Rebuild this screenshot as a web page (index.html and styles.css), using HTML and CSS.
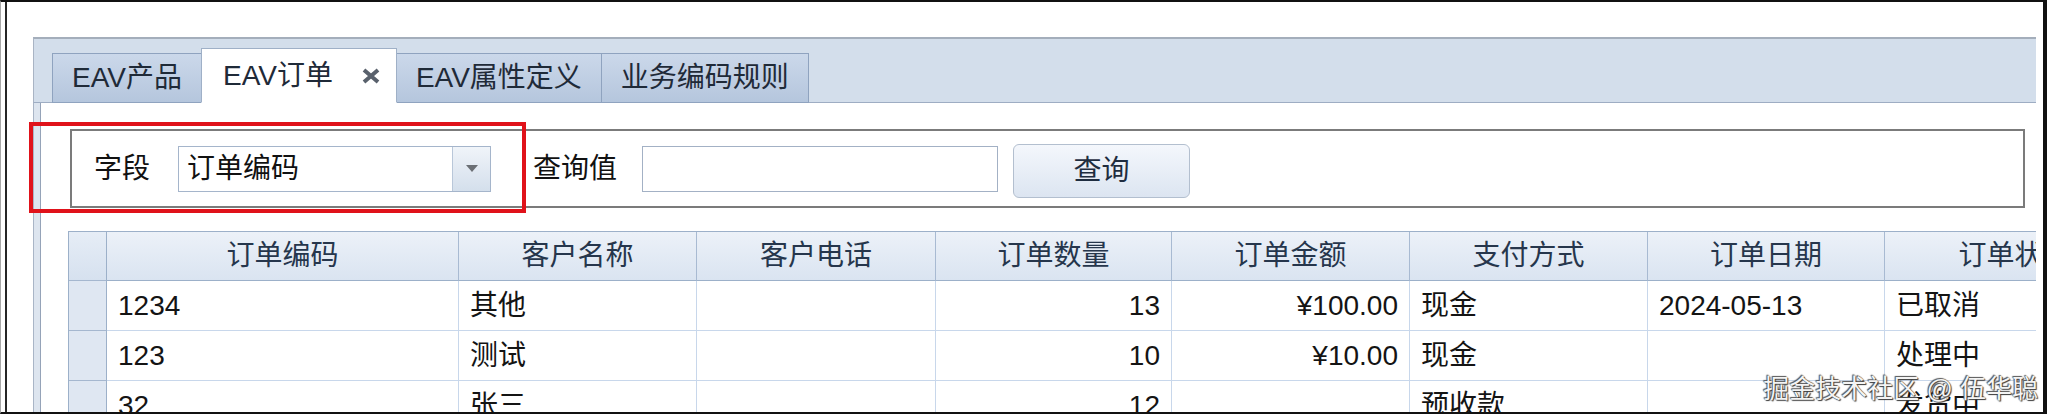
FILE: index.html
```html
<!DOCTYPE html>
<html lang="zh-CN">
<head>
<meta charset="utf-8">
<title>EAV订单</title>
<link rel="stylesheet" href="styles.css">
</head>
<body>
<div class="screen">
  <div class="frame">
    <div class="tabctl">
      <div class="tabstrip">
        <div class="tab">EAV产品</div>
        <div class="tab active">
          <span>EAV订单</span>
          <svg class="close" width="20" height="16" viewBox="0 0 20 16"><path d="M3 2 L17 14 M17 2 L3 14" stroke="#59616c" stroke-width="4" stroke-linecap="butt"/></svg>
        </div>
        <div class="tab">EAV属性定义</div>
        <div class="tab">业务编码规则</div>
      </div>
      <div class="content">
        <div class="page">
          <div class="filter">
            <span class="label">字段</span>
            <div class="combo">
              <span class="combo-text">订单编码</span>
              <span class="combo-btn"><svg width="12" height="7" viewBox="0 0 12 7"><path d="M0 0 L12 0 L6 7 Z" fill="#6b6f75"/></svg></span>
            </div>
            <span class="label label-value">查询值</span>
            <div class="textbox"></div>
            <button class="btn">查询</button>
          </div>
          <div class="grid">
            <div class="row head">
              <div class="cell ind"></div>
              <div class="cell">订单编码</div>
              <div class="cell">客户名称</div>
              <div class="cell">客户电话</div>
              <div class="cell">订单数量</div>
              <div class="cell">订单金额</div>
              <div class="cell">支付方式</div>
              <div class="cell">订单日期</div>
              <div class="cell">订单状态</div>
            </div>
            <div class="row">
              <div class="cell ind"></div>
              <div class="cell">1234</div>
              <div class="cell">其他</div>
              <div class="cell"></div>
              <div class="cell num">13</div>
              <div class="cell num">¥100.00</div>
              <div class="cell">现金</div>
              <div class="cell">2024-05-13</div>
              <div class="cell">已取消</div>
            </div>
            <div class="row">
              <div class="cell ind"></div>
              <div class="cell">123</div>
              <div class="cell">测试</div>
              <div class="cell"></div>
              <div class="cell num">10</div>
              <div class="cell num">¥10.00</div>
              <div class="cell">现金</div>
              <div class="cell"></div>
              <div class="cell">处理中</div>
            </div>
            <div class="row">
              <div class="cell ind"></div>
              <div class="cell">32</div>
              <div class="cell">张三</div>
              <div class="cell"></div>
              <div class="cell num">12</div>
              <div class="cell num"></div>
              <div class="cell">预收款</div>
              <div class="cell"></div>
              <div class="cell">发货中</div>
            </div>
          </div>
        </div>
      </div>
    </div>
  </div>
  <div class="highlight"></div>
  <div class="watermark">掘金技术社区 @ 伍华聪</div>
</div>
</body>
</html>
```

FILE: styles.css
```css
* { box-sizing: border-box; }

html, body {
  margin: 0;
  padding: 0;
  background: #ffffff;
}

body {
  font-family: "Liberation Sans", "Noto Sans CJK SC", sans-serif;
  font-size: 28px;
  color: #111111;
}

.screen {
  position: relative;
  width: 2047px;
  height: 414px;
  overflow: hidden;
  background: #ffffff;
  border-top: 2px solid #111111;
  border-right: 4px solid #111111;
  border-bottom: 2px solid #111111;
  border-left: 1px solid #a8a8a8;
}

.frame {
  height: 100%;
  margin-left: 4px;
  border-left: 2px solid #262626;
  padding-top: 35px;
  padding-left: 26px;
}

.tabctl {
  width: 2003px;
}

/* tab strip */
.tabstrip {
  height: 66px;
  display: flex;
  align-items: flex-end;
  padding-left: 18px;
  background: #d3deeb;
  border-top: 2px solid #a4aebb;
  border-left: 1px solid #a9b4c4;
  border-bottom: 1px solid #9eadc3;
}

.tab {
  height: 50px;
  margin-bottom: -1px;
  padding: 0 19px;
  display: flex;
  align-items: center;
  line-height: 1;
  color: #1f2a38;
  white-space: nowrap;
  background: linear-gradient(#cbd8ea, #b5c6dd);
  border: 1px solid #8fa3bf;
}

.tab + .tab { margin-left: -1px; }

.tab.active {
  height: 55px;
  padding: 0 15px 0 21px;
  gap: 28px;
  background: #ffffff;
  border-color: #9fb0c7;
  border-bottom: 1px solid #ffffff;
  position: relative;
  z-index: 1;
}

.close { display: block; }

/* content area */
.content {
  height: 311px;
  border-left: 1px solid #a9b5c6;
  padding-left: 6px;
  background: #dde5ef;
}

.page {
  height: 100%;
  background: #ffffff;
  border-left: 1px solid #95a3b8;
  padding-top: 26px;
}

/* filter panel */
.filter {
  margin-left: 29px;
  width: 1955px;
  height: 79px;
  border: 2px solid #7b7b7b;
  display: flex;
  align-items: center;
  padding-left: 22px;
}

.label {
  line-height: 1;
  white-space: nowrap;
  color: #111111;
}

.combo {
  margin-left: 28px;
  width: 313px;
  height: 46px;
  border: 1px solid #a5b5cb;
  display: flex;
  align-items: stretch;
  background: #ffffff;
}

.combo-text {
  flex: 1;
  display: flex;
  align-items: center;
  padding-left: 8px;
  line-height: 1;
}

.combo-btn {
  width: 38px;
  display: flex;
  align-items: center;
  justify-content: center;
  border-left: 1px solid #b9c7d9;
  background: linear-gradient(#f0f4f9, #d4dfec);
}

.label-value { margin-left: 42px; }

.textbox {
  margin-left: 25px;
  width: 356px;
  height: 46px;
  border: 1px solid #a3b1c5;
  background: #ffffff;
}

.btn {
  margin-left: 15px;
  width: 177px;
  height: 54px;
  margin-top: 4px;
  border: 1px solid #b3bfcf;
  border-radius: 6px;
  background: linear-gradient(#f4f7fc, #dce5f1);
  font: inherit;
  line-height: 1;
  color: #1f2d40;
  padding: 0;
}

/* grid */
.grid {
  margin: 23px 0 0 27px;
  width: 1968px;
  overflow: hidden;
  border-top: 1px solid #9cb0c9;
  border-left: 1px solid #9cb0c9;
}

.row {
  display: grid;
  grid-template-columns: 38px 352px 238px 239px 236px 238px 238px 237px 260px;
  width: 2076px;
  height: 50px;
}

.row.head { height: 49px; }

.cell {
  display: flex;
  align-items: center;
  padding: 0 11px;
  line-height: 1;
  white-space: nowrap;
  overflow: hidden;
  background: #ffffff;
  border-right: 1px solid #c8d7eb;
  border-bottom: 1px solid #c8d7eb;
  color: #141414;
}

.cell.num { justify-content: flex-end; }

.head .cell {
  justify-content: center;
  background: linear-gradient(#ecf1f8, #dae4f1);
  border-right: 1px solid #a8bad2;
  border-bottom: 1px solid #9cb0c9;
  color: #26364c;
}

.cell.ind {
  padding: 0;
  background: #dfe7f2;
  border-right: 1px solid #9cb0c9;
  border-bottom: 1px solid #a5b7cf;
}

.head .cell.ind {
  background: linear-gradient(#e6edf6, #d6e1ef);
}

/* annotation overlay */
.highlight {
  position: absolute;
  left: 28px;
  top: 120px;
  width: 497px;
  height: 91px;
  border: 4px solid #e0121a;
}

.watermark {
  position: absolute;
  right: 5px;
  bottom: 10px;
  font-size: 26px;
  line-height: 1;
  color: #f4f4f4;
  text-shadow: 0 0 1px #3a3a3a, 1px 1px 1px #3a3a3a, -1px -1px 1px #5a5a5a;
  white-space: nowrap;
}
```
